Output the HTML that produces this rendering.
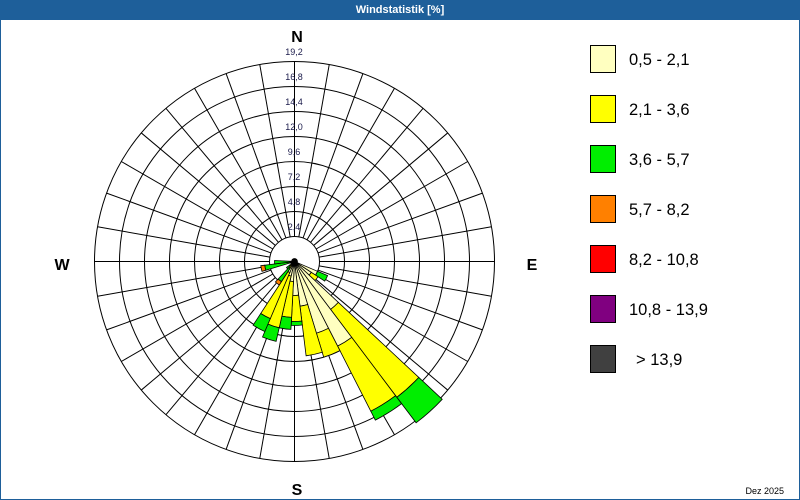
<!DOCTYPE html>
<html><head><meta charset="utf-8"><style>
html,body{margin:0;padding:0;background:#fff}
#w{position:relative;width:798px;height:498px;border:1px solid #1e5f9a;background:#fff;overflow:hidden;font-family:"Liberation Sans",sans-serif}
#t{position:absolute;left:0;top:0;width:798px;height:19px;background:#1e5f9a;color:#fff;font-weight:bold;font-size:11px;line-height:18px;text-align:center}
svg{position:absolute;left:-1px;top:-1px}
</style></head><body><div id="w"><div id="t">Windstatistik [%]</div>
<svg id="s" width="800" height="500" xmlns="http://www.w3.org/2000/svg" font-family="Liberation Sans, sans-serif">
<g id="grid" stroke="#000" stroke-width="1" fill="none"></g>
<g id="bars" stroke="#000" stroke-width="0.8"></g>
<g font-size="9" fill="#1a1a4a" text-anchor="middle">
<text x="294" y="55">19,2</text><text x="294" y="80">16,8</text><text x="294" y="105">14,4</text><text x="294" y="130">12,0</text><text x="294" y="155">9,6</text><text x="294" y="180">7,2</text><text x="294" y="205">4,8</text><text x="294" y="230">2,4</text>
</g>
<g font-size="16" font-weight="bold" fill="#000" text-anchor="middle">
<text x="297" y="42">N</text><text x="297" y="495">S</text><text x="62" y="270">W</text><text x="532" y="270">E</text>
</g>
<g stroke="#000" stroke-width="1">
<rect x="590.5" y="45.5" width="25" height="27" fill="#ffffc0"/>
<rect x="590.5" y="95.5" width="25" height="27" fill="#ffff00"/>
<rect x="590.5" y="145.5" width="25" height="27" fill="#00ee00"/>
<rect x="590.5" y="195.5" width="25" height="27" fill="#ff8000"/>
<rect x="590.5" y="245.5" width="25" height="27" fill="#ff0000"/>
<rect x="590.5" y="295.5" width="25" height="27" fill="#800080"/>
<rect x="590.5" y="345.5" width="25" height="27" fill="#404040"/>
</g>
<g font-size="16.5" fill="#000">
<text x="629" y="65">0,5 - 2,1</text><text x="629" y="115">2,1 - 3,6</text><text x="629" y="165">3,6 - 5,7</text><text x="629" y="215">5,7 - 8,2</text><text x="629" y="265">8,2 - 10,8</text><text x="629" y="315">10,8 - 13,9</text><text x="636" y="365">&gt; 13,9</text>
</g>
<text x="784" y="494" font-size="9" text-anchor="end" fill="#000">Dez 2025</text>
</svg></div>
<script>
var cx=294.5,cy=261.5,NS="http://www.w3.org/2000/svg";
var g=document.getElementById('grid'),b=document.getElementById('bars');
function el(p,t,a){var e=document.createElementNS(NS,t);for(var k in a)e.setAttribute(k,a[k]);p.appendChild(e);return e;}
for(var i=1;i<=8;i++)el(g,'circle',{cx:cx,cy:cy,r:25*i});
for(var d=0;d<360;d+=10){var a=d*Math.PI/180;var s=Math.sin(a),c=-Math.cos(a);
el(g,'line',{x1:cx+25*s,y1:cy+25*c,x2:cx+200*s,y2:cy+200*c});}
el(g,'line',{x1:cx-25,y1:cy,x2:cx-200,y2:cy});
function pt(r,d){var a=d*Math.PI/180;return (cx+r*Math.sin(a)).toFixed(1)+','+(cy-r*Math.cos(a)).toFixed(1);}
function seg(d,r0,r1,col){d-=2;var h=5;var p='M'+pt(r0,d-h)+' L'+pt(r1,d-h)+' A'+r1+','+r1+' 0 0 1 '+pt(r1,d+h)+' L'+pt(r0,d+h);
if(r0>0)p+=' A'+r0+','+r0+' 0 0 0 '+pt(r0,d-h);p+=' Z';el(b,'path',{d:p,fill:col});}
var P='#ffffc0',Y='#ffff00',G='#00ee00',O='#ff8000';
var bars=[[120,[[25,P],[36,G]]],[130,[[20,P],[28,Y]]],[140,[[60,P],[170,Y],[202,G]]],[150,[[95,P],[168,Y],[178,G]]],[160,[[75,P],[100,Y]]],[170,[[45,P],[95,Y]]],[180,[[34,P],[60,Y],[64,G]]],[190,[[20,P],[56,Y],[68,G]]],[200,[[15,P],[68,Y],[82,G]]],[210,[[12,P],[62,Y],[76,G]]],[220,[[8,Y],[24,G],[28,O]]],[230,[[6,Y],[10,G]]],[260,[[4,Y],[30,G],[34,O]]],[270,[[4,Y],[20,G]]],[250,[[4,G]]]];
bars.forEach(function(x){var r0=0;x[1].forEach(function(s){seg(x[0],r0,s[0],s[1]);r0=s[0];});});
el(b,'circle',{cx:cx,cy:cy,r:3,fill:'#000'});
</script></body></html>
